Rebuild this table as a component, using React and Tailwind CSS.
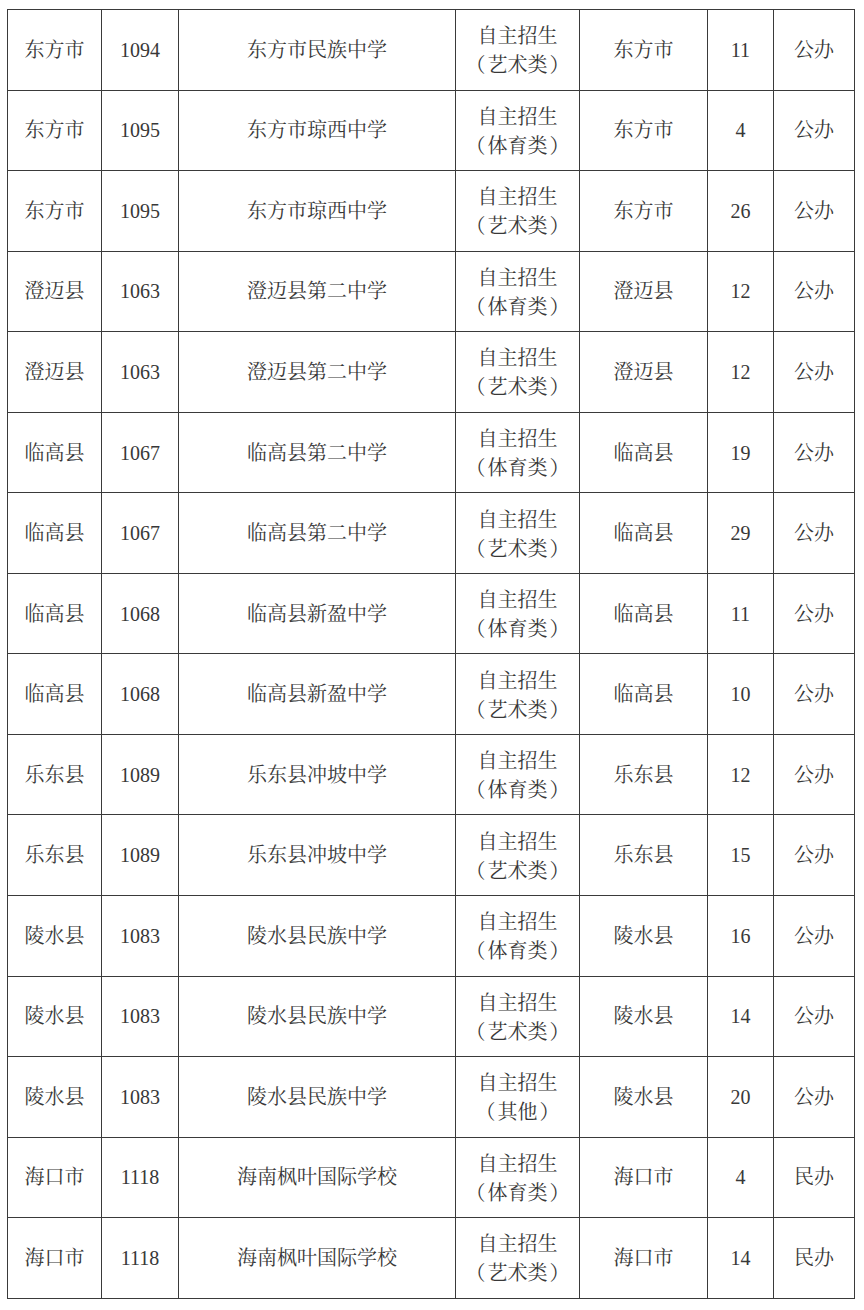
import React from "react";

const rows = [
  ["东方市", "1094", "东方市民族中学", "艺术类", "东方市", "11", "公办"],
  ["东方市", "1095", "东方市琼西中学", "体育类", "东方市", "4", "公办"],
  ["东方市", "1095", "东方市琼西中学", "艺术类", "东方市", "26", "公办"],
  ["澄迈县", "1063", "澄迈县第二中学", "体育类", "澄迈县", "12", "公办"],
  ["澄迈县", "1063", "澄迈县第二中学", "艺术类", "澄迈县", "12", "公办"],
  ["临高县", "1067", "临高县第二中学", "体育类", "临高县", "19", "公办"],
  ["临高县", "1067", "临高县第二中学", "艺术类", "临高县", "29", "公办"],
  ["临高县", "1068", "临高县新盈中学", "体育类", "临高县", "11", "公办"],
  ["临高县", "1068", "临高县新盈中学", "艺术类", "临高县", "10", "公办"],
  ["乐东县", "1089", "乐东县冲坡中学", "体育类", "乐东县", "12", "公办"],
  ["乐东县", "1089", "乐东县冲坡中学", "艺术类", "乐东县", "15", "公办"],
  ["陵水县", "1083", "陵水县民族中学", "体育类", "陵水县", "16", "公办"],
  ["陵水县", "1083", "陵水县民族中学", "艺术类", "陵水县", "14", "公办"],
  ["陵水县", "1083", "陵水县民族中学", "其他", "陵水县", "20", "公办"],
  ["海口市", "1118", "海南枫叶国际学校", "体育类", "海口市", "4", "民办"],
  ["海口市", "1118", "海南枫叶国际学校", "艺术类", "海口市", "14", "民办"],
];

const font = {
  fontFamily:
    '"Liberation Serif", "Noto Serif CJK SC", "Noto Sans CJK SC", serif',
};

const cell = "border-[1.5px] border-[#3a3a3a] text-center align-middle p-0";

export default function App() {
  return (
    <div className="w-[864px] h-[1310px] bg-white pl-[7px] pt-[9px]">
      <table
        className="table-fixed border-collapse text-[20px] text-[#383838] w-[847px]"
        style={font}
      >
        <colgroup>
          <col className="w-[94px]" />
          <col className="w-[77px]" />
          <col className="w-[277px]" />
          <col className="w-[124px]" />
          <col className="w-[128px]" />
          <col className="w-[66px]" />
          <col className="w-[81px]" />
        </colgroup>
        <tbody>
          {rows.map((r, i) => (
            <tr key={i} className="h-[80.56px]">
              <td className={cell}>{r[0]}</td>
              <td className={cell}>{r[1]}</td>
              <td className={cell}>{r[2]}</td>
              <td className={`${cell} leading-[29px] pt-[3px]`}>
                <div>自主招生</div>
                <div>
                  <span className="mr-[2px]">（</span>
                  {r[3]}
                  <span className="ml-[2px]">）</span>
                </div>
              </td>
              <td className={cell}>{r[4]}</td>
              <td className={cell}>{r[5]}</td>
              <td className={cell}>{r[6]}</td>
            </tr>
          ))}
        </tbody>
      </table>
    </div>
  );
}
